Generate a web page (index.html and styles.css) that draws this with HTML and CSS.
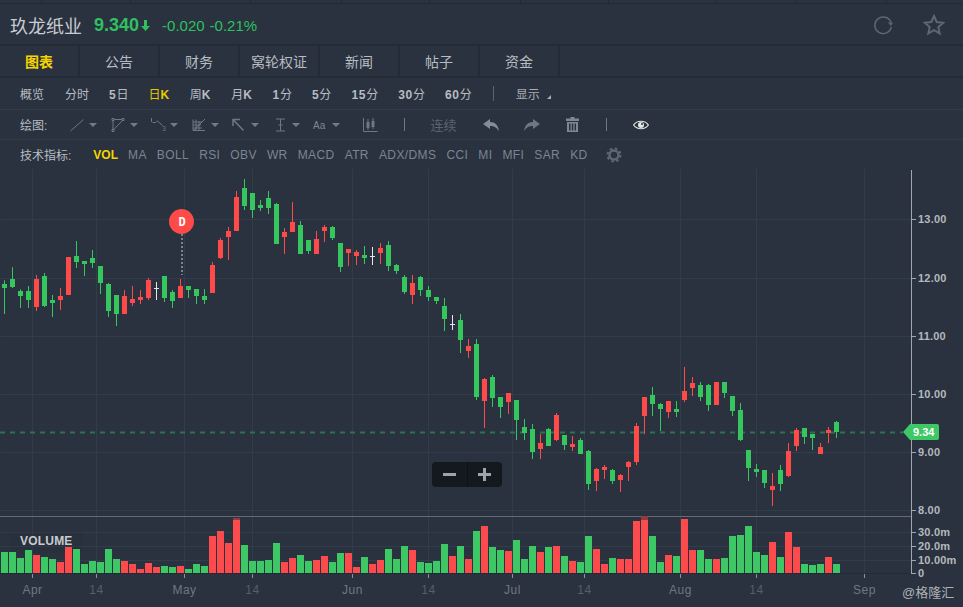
FILE: index.html
```html
<!DOCTYPE html>
<html lang="zh-CN">
<head>
    <meta charset="UTF-8">
    <title>玖龙纸业</title>
    <link rel="stylesheet" href="styles.css">
</head>
<body>
    <div class="strip"></div>

    <!-- 标题 -->
    <div class="header">
        <span class="name">玖龙纸业</span>
        <span class="price">9.340</span>
        <svg class="price-arrow" width="9" height="12" viewBox="0 0 9 12"><path d="M3 1h3v6h3l-4.500 5L0 7h3z"/></svg>
        <span class="change">-0.020</span>
        <span class="change">-0.21%</span>
        <div class="header-icons">
            <svg width="20" height="20" viewBox="0 0 20 20" fill="none" stroke="#5d6673" stroke-width="1.500"><path d="M18 7.500A8.300 8.300 0 1 0 18.300 12"/><path d="M14.800 7.500h5.200l-2 3.400z" fill="#5d6673" stroke="none"/></svg>
            <svg width="22" height="22" viewBox="0 0 22 22" fill="none" stroke="#5d6673" stroke-width="2"><path d="M11 2l2.700 6 6.500.7-4.900 4.300 1.400 6.400L11 16.100l-5.700 3.300 1.400-6.400L1.800 8.700 8.300 8z"/></svg>
        </div>
    </div>

    <!-- 页签 -->
    <div class="tabs">
        <div class="tab active">图表</div>
        <div class="tab">公告</div>
        <div class="tab">财务</div>
        <div class="tab">窝轮权证</div>
        <div class="tab">新闻</div>
        <div class="tab">帖子</div>
        <div class="tab">资金</div>
    </div>

    <!-- 周期 -->
    <div class="periods">
        <span class="first">概览</span>
        <span>分时</span>
        <span><b>5</b>日</span>
        <span class="on">日<b>K</b></span>
        <span>周<b>K</b></span>
        <span>月<b>K</b></span>
        <span><b>1</b>分</span>
        <span><b>5</b>分</span>
        <span><b>15</b>分</span>
        <span><b>30</b>分</span>
        <span><b>60</b>分</span>
        <i class="bar"></i>
        <span class="show">显示<i class="corner"></i></span>
    </div>

    <!-- 绘图 -->
    <div class="draw">
        <span class="row-label">绘图:</span>
        <div class="tool">
            <svg width="16" height="14" viewBox="0 0 16 14" class="ic"><path d="M0.500 13L13.500 1.500"/></svg><i class="caret"></i>
        </div>
        <div class="tool">
            <svg width="16" height="14" viewBox="0 0 16 14" class="ic"><path d="M1 .5h2v2H1zM11 .5h2v2h-2zM1 11.500h2v2H1zM3 1.500h8M2 2.500v9M11.500 2.500L2.800 11.500"/></svg><i class="caret"></i>
        </div>
        <div class="tool">
            <svg width="16" height="14" viewBox="0 0 16 14" class="ic"><path d="M.5 0v4M1.500 4.500l3 0 2-1.500 5 4.500"/><text x="11" y="13" class="ic-text">3</text></svg><i class="caret"></i>
        </div>
        <div class="tool">
            <svg width="16" height="14" viewBox="0 0 16 14" class="ic"><path d="M1 1.500v11h12M1 4h9M1 7h8M1 10h9M4 1.500v11M7 3v9.500M2 12L13 1"/></svg><i class="caret"></i>
        </div>
        <div class="tool">
            <svg width="16" height="14" viewBox="0 0 16 14" class="ic ic-thick"><path d="M1 8V1.500h7M1.500 2L11.500 12.500"/></svg><i class="caret"></i>
        </div>
        <div class="tool">
            <svg width="16" height="14" viewBox="0 0 16 14" class="ic"><path d="M3 1h9M7.500 1v12M3 13h9M5.500 7h4"/></svg><i class="caret"></i>
        </div>
        <div class="tool">
            <svg width="16" height="14" viewBox="0 0 16 14"><text x="0" y="11" class="ic-aa">Aa</text></svg><i class="caret"></i>
        </div>
        <svg class="candle-btn" width="15" height="14" viewBox="0 0 15 14" fill="#6f7785" stroke="#6f7785"><path d="M.5 0v13.500h14" fill="none"/><path d="M5 1v11M10 0v11"/><rect x="3.500" y="4" width="3" height="6" stroke="none"/><rect x="8.500" y="3" width="3" height="6" stroke="none"/></svg>
        <i class="bar bar-draw"></i>
        <span class="cont">连续</span>
        <svg class="undo" width="16" height="12" viewBox="0 0 16 12"><path d="M0 5L7 0v3c5 0 8 3 9 9-3-4-5-5-9-5v3z"/></svg>
        <svg class="redo" width="16" height="12" viewBox="0 0 16 12"><path d="M16 5L9 0v3C4 3 1 6 0 12c3-4 5-5 9-5v3z"/></svg>
        <svg class="trash" width="13" height="15" viewBox="0 0 13 15"><path d="M4.500 0h4v1.500H13V4H0V1.500h4.500zM1 5h11v10H1zM3 6.500v7h1.500v-7zM5.800 6.500v7h1.500v-7zM8.600 6.500v7H10v-7z" fill-rule="evenodd"/></svg>
        <i class="bar bar-draw2"></i>
        <svg class="eye" width="16" height="10" viewBox="0 0 16 10"><path d="M.6 5C4 0 12 0 15.400 5 12 10 4 10 .6 5z" fill="none" stroke="#e4e6e8" stroke-width="1.200"/><circle cx="8" cy="5" r="3" fill="#e4e6e8"/><circle cx="9" cy="4" r="1" fill="#29323e"/></svg>
    </div>

    <!-- 技术指标 -->
    <div class="indicators">
        <span class="row-label">技术指标:</span>
        <div class="ind-list">
            <span class="on">VOL</span>
            <span>MA</span>
            <span>BOLL</span>
            <span>RSI</span>
            <span>OBV</span>
            <span>WR</span>
            <span>MACD</span>
            <span>ATR</span>
            <span>ADX/DMS</span>
            <span>CCI</span>
            <span>MI</span>
            <span>MFI</span>
            <span>SAR</span>
            <span>KD</span>
        </div>
        <svg class="gear" width="16" height="16" viewBox="0 0 16 16" fill="none" stroke="#5d6673"><circle cx="8" cy="8" r="4.500" stroke-width="2.500"/><circle cx="8" cy="8" r="6.500" stroke-width="2" stroke-dasharray="2.600 2.500"/></svg>
    </div>

    <!-- K线图 -->
    <div class="chart">
        <div id="chart"></div>
        <div class="zoom-ctl">
            <div class="zoom-btn"><i class="zoom-h"></i></div>
            <div class="zoom-btn zoom-plus"><i class="zoom-h"></i><i class="zoom-v"></i></div>
        </div>
        <span class="watermark">@格隆汇</span>
    </div>

    <script src="chart.js"></script>
</body>
</html>
```

FILE: styles.css
```css
body {
    margin: 0;
    width: 963px;
    height: 607px;
    overflow: hidden;
    background-color: #29323e;
    color: #b8bcc2;
    font-family: "Liberation Sans", "Noto Sans CJK SC", sans-serif;
    font-size: 12px;
}

.strip {
    height: 3px;
    border-bottom: 1px solid #222a34;
    background:
        linear-gradient(#222a34, #222a34) 41px 0 / 1px 100% no-repeat,
        linear-gradient(#222a34, #222a34) 130px 0 / 1px 100% no-repeat,
        linear-gradient(#222a34, #222a34) 250px 0 / 1px 100% no-repeat,
        linear-gradient(#222a34, #222a34) 341px 0 / 1px 100% no-repeat,
        linear-gradient(#222a34, #222a34) 429px 0 / 1px 100% no-repeat,
        linear-gradient(#222a34, #222a34) 520px 0 / 1px 100% no-repeat,
        linear-gradient(#222a34, #222a34) 608px 0 / 1px 100% no-repeat,
        linear-gradient(#222a34, #222a34) 716px 0 / 1px 100% no-repeat,
        linear-gradient(#222a34, #222a34) 796px 0 / 1px 100% no-repeat,
        linear-gradient(#222a34, #222a34) 886px 0 / 1px 100% no-repeat;
}

/* 标题 */
.header {
    display: flex;
    align-items: center;
    box-sizing: border-box;
    height: 42px;
    padding: 2px 18px 0 10px;
    border-bottom: 2px solid #232b36;
}

.name {
    font-size: 18px;
    color: #c8cbd0;
}

.price {
    margin-left: 12px;
    font-size: 18px;
    font-weight: bold;
    color: #2fc062;
}

.price-arrow {
    margin-left: 2px;
    fill: #2fc062;
}

.change {
    margin-left: 5px;
    font-size: 15px;
    color: #2fc062;
}

.price-arrow + .change {
    margin-left: 12px;
}

.header-icons {
    display: flex;
    align-items: center;
    gap: 30px;
    margin-left: auto;
}

/* 页签 */
.tabs {
    display: flex;
    height: 32px;
    box-sizing: border-box;
    border-bottom: 2px solid #232b36;
}

.tab {
    box-sizing: border-box;
    width: 80px;
    height: 30px;
    border-right: 2px solid #232b36;
    font-size: 14px;
    line-height: 32px;
    text-align: center;
}

.tab.active {
    color: #f5d400;
    font-weight: bold;
}

/* 周期 */
.periods {
    display: flex;
    align-items: center;
    gap: 20px;
    box-sizing: border-box;
    height: 32px;
    padding-left: 20px;
    border-bottom: 1px solid #333c49;
}

.periods .first {
    margin-right: 1px;
}

.periods b {
    letter-spacing: 0.7px;
}

.periods .on {
    color: #e8c800;
}

.bar {
    width: 1px;
    height: 15px;
    margin: 0 0 0 1px;
    background-color: #5b6470;
}

.show {
    margin-left: 2px;
    color: #a9adb4;
}

.corner {
    display: inline-block;
    width: 0;
    height: 0;
    margin-left: 7px;
    border-style: solid;
    border-width: 0 0 4px 4px;
    border-color: transparent transparent #a9adb4 transparent;
}

/* 绘图 */
.draw {
    display: flex;
    align-items: center;
    box-sizing: border-box;
    height: 30px;
    padding-left: 20px;
    border-bottom: 1px solid #333c49;
}

.row-label {
    color: #b8bcc2;
}

.draw .row-label {
    width: 50px;
}

.tool {
    display: flex;
    align-items: center;
    gap: 3px;
    width: 40.5px;
}

.ic {
    fill: none;
    stroke: #6f7785;
}

.ic-thick {
    stroke-width: 1.500;
}

.ic-text {
    fill: #6f7785;
    stroke: none;
    font-size: 7px;
}

.ic-aa {
    fill: #7f8795;
    font-size: 10px;
}

.caret {
    width: 0;
    height: 0;
    border-style: solid;
    border-width: 4px 4px 0 4px;
    border-color: #737b88 transparent transparent transparent;
}

.candle-btn {
    margin-left: 9px;
}

.bar-draw {
    height: 13px;
    margin-left: 26px;
    background-color: #6f7785;
}

.cont {
    margin-left: 26px;
    font-size: 13px;
    color: #5b6470;
}

.undo {
    margin-left: 26px;
    fill: #858c97;
}

.redo {
    margin-left: 25px;
    fill: #6e7681;
}

.trash {
    margin-left: 26px;
    fill: #7f8791;
}

.bar-draw2 {
    height: 13px;
    margin-left: 27px;
    background-color: #6f7785;
}

.eye {
    margin-left: 26px;
}

/* 技术指标 */
.indicators {
    display: flex;
    align-items: center;
    height: 29px;
    padding-left: 20px;
}

.ind-list {
    display: flex;
    gap: 10px;
    margin-left: 22px;
    letter-spacing: 0.4px;
    color: #7c8592;
}

.ind-list .on {
    color: #f5d400;
    font-weight: bold;
    letter-spacing: 0;
}

.gear {
    margin-left: 18px;
}

/* K线图 */
.chart {
    position: relative;
    height: 438px;
}

#chart svg {
    display: block;
}

.grid {
    stroke: #323c4a;
    stroke-width: 1;
}

.axis-label {
    fill: #b5b8bd;
    font-size: 11px;
    font-weight: bold;
    letter-spacing: 0.2px;
}

.month {
    fill: #6f7785;
    font-size: 12px;
    letter-spacing: 0.5px;
    text-anchor: middle;
}

.week {
    fill: #565e6a;
    font-size: 12px;
    letter-spacing: 0.5px;
    text-anchor: middle;
}

.vol-label {
    fill: #c9cbd0;
    font-size: 12px;
    font-weight: bold;
    letter-spacing: 0.2px;
}

.tag-text {
    fill: #ffffff;
    font-size: 11px;
    font-weight: bold;
}

.marker-text {
    fill: #ffffff;
    font-family: "Liberation Mono", monospace;
    font-size: 12px;
    font-weight: bold;
    text-anchor: middle;
}

.zoom-ctl {
    position: absolute;
    left: 432px;
    top: 293px;
    display: flex;
    width: 70px;
    height: 25px;
    border-radius: 4px;
    background-color: #14181f;
}

.zoom-btn {
    position: relative;
    flex: 1;
}

.zoom-plus {
    border-left: 1px solid #0d1015;
}

.zoom-h {
    position: absolute;
    left: 11px;
    top: 11px;
    width: 13px;
    height: 3px;
    background-color: #a0a3a8;
}

.zoom-plus .zoom-h {
    left: 10px;
}

.zoom-v {
    position: absolute;
    left: 15px;
    top: 6px;
    width: 3px;
    height: 13px;
    background-color: #a0a3a8;
}

.watermark {
    position: absolute;
    left: 902px;
    top: 413px;
    font-size: 13px;
    color: #aeb1b6;
}
```

FILE: chart.js
```js
// 蜡烛数据: 类型, 最高, 实体上, 实体下, 最低 (页面 y 坐标)
const candles = [
    ["g",280.3,284,288,314],["g",267.3,279,287,288],["g",289.3,291,296,308],["g",286,291,300,308],
    ["r",275,279,307,311],["g",273,276,306,307],["g",295,300,303,317],["r",288,296,300,310],
    ["r",257,257,295,295],["g",241,256,262,268],["g",261,261,264,276],["g",250,258,263,268],
    ["g",266,266,283,294],["g",283,284,311,317],["g",295,295,314,326],["r",290,296,314,314],
    ["r",286,299,303,306],["r",290,297,300,304],["r",278,280,298,300],["w",282,288,289,300],
    ["g",276,276,298,302],["g",290,292,301,308],["r",279,286,298,298],["g",286,286,290,298],
    ["g",289,289,296,304],["g",289,296,300,304],["r",262,265,293,293],["r",238,240,258,259],
    ["r",227,231,237,260],["r",191,197,231,231],["g",179,188,206,210],["g",193,193,210,218],
    ["g",200,205,208,211],["g",191,198,208,214],["g",203,204,244,244],["r",228,232,237,254],
    ["r",202,222,232,232],["g",221,225,254,254],["g",240,240,251,254],["r",231,239,254,254],
    ["r",225,227,231,242],["g",226,227,238,240],["g",243,243,267,272],["r",249,249,253,266],
    ["r",250,252,256,265],["g",246,255,258,264],["w",247,256,257,265],["r",243,248,253,264],
    ["g",241,245,266,271],["g",264,265,271,274],["g",275,277,292,294],["r",275,283,295,304],
    ["g",276,277,290,296],["g",286,290,297,301],["g",297,297,301,304],["g",298,306,319,331],
    ["w",315,324,325,330],["g",314,320,340,353],["r",339,346,351,358],["g",339,344,397,400],
    ["r",378,379,401,428],["g",375,377,398,407],["g",397,397,407,418],["r",393,393,402,414],
    ["g",400,400,420,440],["g",419,427,433,440],["g",424,429,452,459],["r",434,443,449,459],
    ["g",428,429,446,446],["r",413,415,440,441],["g",435,435,445,450],["r",436,444,447,451],
    ["g",438,440,454,454],["g",450,451,484,490],["r",468,469,481,491],["r",465,467,470,479],
    ["g",469,470,481,484],["r",474,475,480,492],["r",461,462,467,481],["r",423,426,462,465],
    ["r",397,397,416,434],["g",387,395,404,416],["g",403,404,409,431],["r",401,401,412,418],
    ["g",401,409,412,417],["r",367,391,400,402],["r",377,383,388,396],["g",382,385,397,401],
    ["g",384,385,405,411],["r",382,382,405,405],["g",382,382,393,398],["g",396,396,411,416],
    ["g",403,410,440,441],["g",450,450,468,481],["g",464,469,472,477],["g",470,470,483,488],
    ["r",473,486,490,506],["g",465,470,484,491],["r",443,451,476,477],["r",428,430,446,451],
    ["g",428,428,437,444],["g",434,434,438,450],["r",443,447,454,454],["r",427,430,433,443],
    ["g",421,422,432,438]
];

// 成交量: 每根柱子的顶部 y 坐标, 颜色
const volume = [
    ["g",552],["g",552],["g",558],["g",550],["r",555],["g",557],["g",559],["r",562],["r",547],["g",549],
    ["g",564],["g",561],["g",562],["g",549],["g",559],["r",561],["r",564],["r",569],["r",563],["r",567],
    ["g",566],["g",567],["r",566],["g",569],["g",564],["g",566],["r",536],["r",531],["r",543],["r",520],
    ["g",545],["g",561],["g",561],["g",560],["g",543],["r",562],["r",558],["g",555],["g",561],["r",560],
    ["r",556],["g",562],["g",553],["r",553],["r",567],["g",557],["r",564],["r",560],["g",549],["g",559],
    ["g",546],["r",550],["g",562],["g",563],["g",561],["g",544],["r",556],["g",546],["r",559],["g",531],
    ["r",526],["g",547],["g",550],["r",551],["g",540],["g",559],["g",546],["r",552],["g",547],["r",546],
    ["g",556],["r",561],["g",562],["g",536],["r",549],["r",564],["g",558],["r",559],["r",559],["r",521],
    ["r",520],["g",536],["g",562],["r",555],["g",556],["r",519],["r",550],["g",550],["g",559],["r",559],
    ["g",558],["g",536],["g",535],["g",526],["g",552],["g",555],["r",542],["g",557],["r",532],["r",547],
    ["g",564],["g",565],["g",564],["r",557],["g",564]
];

const colors = { g: "#36c65e", r: "#ff4a4a", w: "#e4e6e8" };
const volColors = { g: "#3ec865", r: "#fd4a4c" };

const vLines = [32, 96, 184, 252, 352, 428, 512, 584, 680, 756, 864];
const hLines = [219, 278, 336, 394, 452, 510, 532, 546, 560];
const priceLabels = [[219, "13.00"], [278, "12.00"], [336, "11.00"], [394, "10.00"], [452, "9.00"], [510, "8.00"]];
const volLabels = [[532, "30.0m"], [546, "20.0m"], [560, "10.00m"], [573, "0"]];
const months = [[32, "Apr", "month"], [96, "14", "week"], [184, "May", "month"], [252, "14", "week"],
    [352, "Jun", "month"], [428, "14", "week"], [512, "Jul", "month"], [584, "14", "week"],
    [680, "Aug", "month"], [756, "14", "week"], [864, "Sep", "month"]];

function rect(x, y, w, h, fill) {
    return `<rect x="${x}" y="${y}" width="${w}" height="${h}" fill="${fill}"/>`;
}

let out = "";

// 网格
vLines.forEach(x => { out += `<line class="grid" x1="${x + 0.5}" y1="169" x2="${x + 0.5}" y2="573"/>`; });
hLines.forEach(y => { out += `<line class="grid" x1="1" y1="${y + 0.5}" x2="911" y2="${y + 0.5}"/>`; });

// 现价虚线
out += `<line x1="0" y1="432.500" x2="903" y2="432.500" stroke="#2f7250" stroke-width="2" stroke-dasharray="5 5"/>`;

// 蜡烛
candles.forEach((c, i) => {
    const x = 4 + 8 * i;
    const fill = colors[c[0]];
    out += rect(x, c[1], 1, c[4] - c[1], fill);
    out += c[0] === "w" ? rect(x - 2, c[2], 5, 1, fill) : rect(x - 2, c[2], 5, c[3] - c[2], fill);
});

// 分隔线和成交量
out += rect(0, 516, 911, 1, "#666a71");
out += `<rect x="9" y="532" width="74" height="21" fill="#1e2630" fill-opacity="0.120"/>`;
volume.forEach((v, i) => {
    out += rect(1 + 8 * i, v[1], 7, 573 - v[1], volColors[v[0]]);
});
out += rect(233, 518, 7, 2, "#8e3b42");
out += rect(641, 516, 7, 4, "#8e3b42");
out += `<text class="vol-label" x="20" y="545">VOLUME</text>`;

// 坐标轴
out += rect(911, 170, 1, 404, "#a3a6ab");
out += rect(0, 573, 911, 1, "#232b36");
priceLabels.concat(volLabels).forEach(l => {
    out += rect(912, l[0], 4, 1, "#a3a6ab");
    out += `<text class="axis-label" x="918" y="${l[0] + 4}">${l[1]}</text>`;
});
months.forEach(m => {
    out += rect(m[0], 574, 1, 4, "#8b8f96");
    out += `<text class="${m[2]}" x="${m[0] + 0.5}" y="594">${m[1]}</text>`;
});

// D 标记
out += `<line x1="182" y1="234" x2="182" y2="275" stroke="#7d8289" stroke-width="2" stroke-dasharray="2 2"/>`;
out += `<circle cx="181.500" cy="221.500" r="12.500" fill="#ff4a4a"/>`;
out += `<text class="marker-text" x="182" y="226">D</text>`;

// 现价标签
out += `<path d="M903 432l7-8h27a2 2 0 0 1 2 2v12a2 2 0 0 1-2 2h-27z" fill="#3ec865"/>`;
out += `<text class="tag-text" x="913" y="436">9.34</text>`;

document.getElementById("chart").innerHTML =
    `<svg width="963" height="438" viewBox="0 169 963 438">${out}</svg>`;
```
